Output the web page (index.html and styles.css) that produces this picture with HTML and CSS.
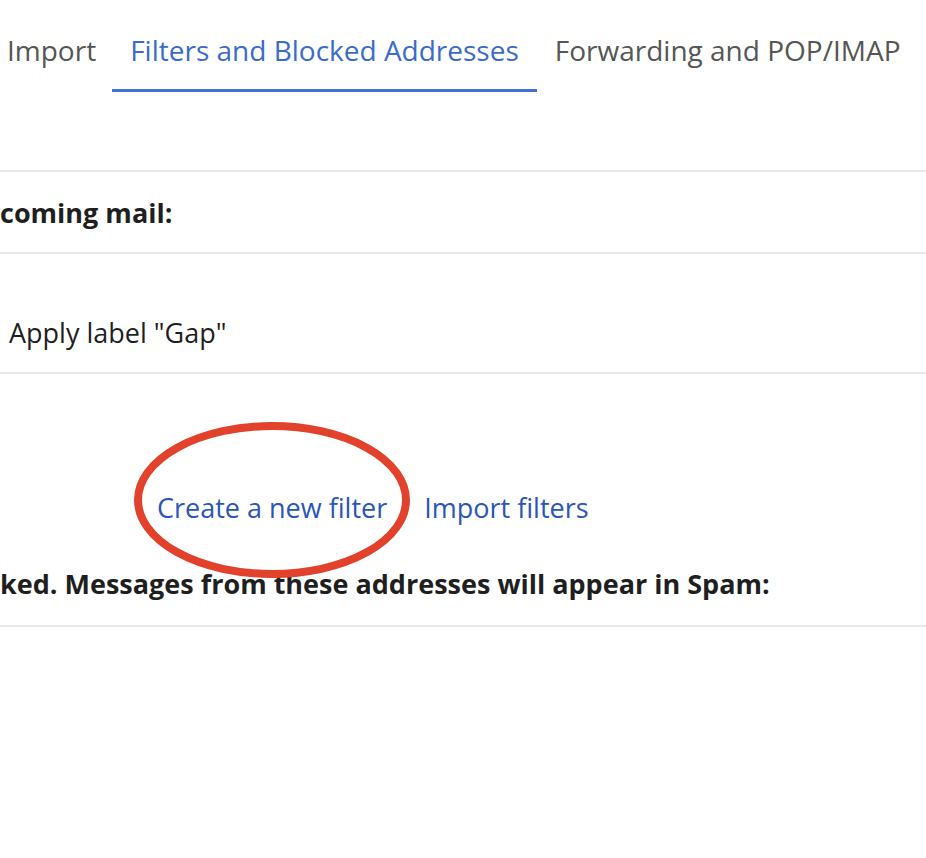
FILE: index.html
```html
<!DOCTYPE html>
<html lang="en">
<head>
    <meta charset="UTF-8">
    <meta name="viewport" content="width=device-width, initial-scale=1.0">
    <title>Settings - Filters and Blocked Addresses</title>
    <link rel="stylesheet" href="styles.css">
</head>
<body>
    <nav class="tabs">
        <a class="tab first" href="#">Import</a>
        <a class="tab active" href="#">Filters and Blocked Addresses</a>
        <a class="tab" href="#">Forwarding and POP/IMAP</a>
    </nav>

    <section class="filters">
        <div class="row heading">coming mail:</div>
        <div class="row filter-item">Apply label "Gap"</div>
        <div class="actions">
            <span class="link-wrap">
                <a class="link" href="#">Create a new filter</a>
                <!-- circulo rojo de la captura -->
                <svg class="annot" width="290" height="170" viewBox="0 0 290 170">
                    <ellipse cx="139" cy="79" rx="134" ry="74" fill="none" stroke="#e2412b" stroke-width="8"/>
                </svg>
            </span>
            <a class="link" href="#">Import filters</a>
        </div>
    </section>

    <section class="blocked">
        <div class="row heading">ked. Messages from these addresses will appear in Spam:</div>
    </section>
</body>
</html>
```

FILE: styles.css
```css
/* Estilos de la pagina */
body {
    font-family: "Open Sans", Roboto, Arial, sans-serif;
    margin: 0;
    padding: 0;
    background: #fff;
    color: #1f1f1f;
    overflow: hidden;
}
a {
    text-decoration: none;
}
.tabs {
    display: flex;
    height: 92px;
}
.tab {
    display: flex;
    align-items: center;
    padding: 10px 18px 0;
    font-size: 28px;
    color: #565656;
    border-bottom: 3px solid transparent;
    box-sizing: border-box;
    height: 92px;
}
.tab.first {
    padding-left: 7px;
    padding-right: 16px;
}
.tab.active {
    color: #3b6bcb;
    border-bottom-color: #3f70d3;
}
.filters {
    margin-top: 78px;
    border-top: 2px solid #e8e8e8;
}
.row {
    display: flex;
    align-items: center;
    border-bottom: 2px solid #e8e8e8;
    font-size: 27px;
    white-space: nowrap;
}
.heading {
    height: 80px;
    font-weight: bold;
}
.filter-item {
    height: 120px;
    padding-left: 9px;
    padding-top: 38px;
    box-sizing: border-box;
}
.actions {
    display: flex;
    gap: 37px;
    padding: 116px 0 0 157px;
    height: 34px;
    align-items: center;
}
.link-wrap {
    position: relative;
}
.link {
    font-size: 27px;
    color: #2b56b8;
}
.annot {
    position: absolute;
    left: -24px;
    top: -68px;
    pointer-events: none;
}
.blocked {
    margin-top: 17px;
}
.blocked .heading {
    height: 84px;
}
```
